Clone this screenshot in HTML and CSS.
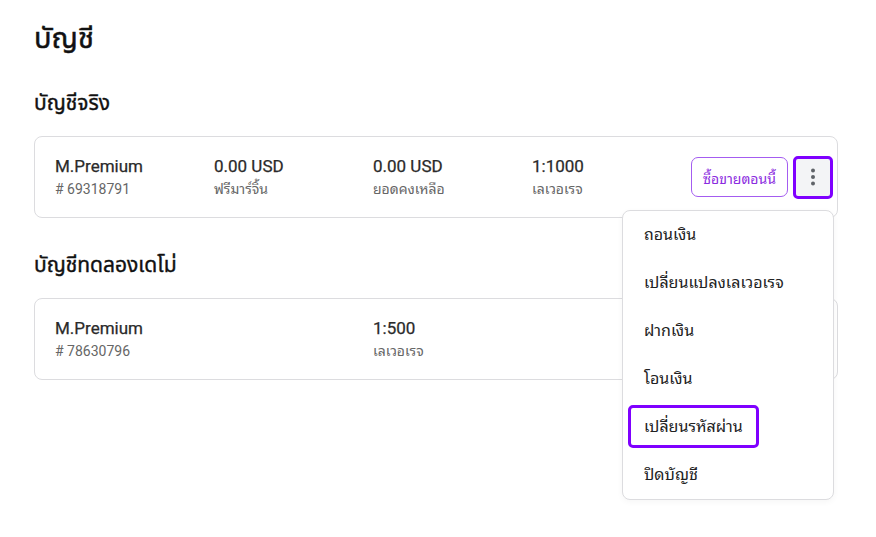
FILE: index.html
```html
<!DOCTYPE html>
<html lang="th">
<head>
<meta charset="utf-8">
<title>บัญชี</title>
<link rel="stylesheet" href="styles.css">
</head>
<body>
<main class="page">
  <h1 class="title">บัญชี</h1>

  <h2 class="section-title">บัญชีจริง</h2>
  <div class="card">
    <div class="col">
      <div class="main">M.Premium</div>
      <div class="sub"># 69318791</div>
    </div>
    <div class="col">
      <div class="main">0.00 USD</div>
      <div class="sub">ฟรีมาร์จิ้น</div>
    </div>
    <div class="col">
      <div class="main">0.00 USD</div>
      <div class="sub">ยอดคงเหลือ</div>
    </div>
    <div class="col">
      <div class="main">1:1000</div>
      <div class="sub">เลเวอเรจ</div>
    </div>
    <div class="actions">
      <button class="trade-btn">ซื้อขายตอนนี้</button>
      <div class="kebab-wrap">
        <button class="kebab-btn" aria-label="more">
          <svg width="6" height="18" viewBox="0 0 6 18"><circle cx="3" cy="2.5" r="2" fill="#5f6368"/><circle cx="3" cy="9" r="2" fill="#5f6368"/><circle cx="3" cy="15.5" r="2" fill="#5f6368"/></svg>
        </button>
        <ul class="menu">
          <li class="menu-item"><span class="menu-link">ถอนเงิน</span></li>
          <li class="menu-item"><span class="menu-link">เปลี่ยนแปลงเลเวอเรจ</span></li>
          <li class="menu-item"><span class="menu-link">ฝากเงิน</span></li>
          <li class="menu-item"><span class="menu-link">โอนเงิน</span></li>
          <li class="menu-item"><span class="menu-link focused">เปลี่ยนรหัสผ่าน</span></li>
          <li class="menu-item"><span class="menu-link">ปิดบัญชี</span></li>
        </ul>
      </div>
    </div>
  </div>

  <h2 class="section-title">บัญชีทดลองเดโม่</h2>
  <div class="card">
    <div class="col">
      <div class="main">M.Premium</div>
      <div class="sub"># 78630796</div>
    </div>
    <div class="col"></div>
    <div class="col">
      <div class="main">1:500</div>
      <div class="sub">เลเวอเรจ</div>
    </div>
    <div class="col"></div>
    <div class="actions"></div>
  </div>
</main>
</body>
</html>
```

FILE: styles.css
```css
* { box-sizing: border-box; }
html, body { margin: 0; background: #ffffff; }
body {
  font-family: Roboto, "Noto Sans Thai Looped", Loma, Garuda, Tahoma, "Noto Sans", sans-serif;
  color: #222222;
}
.page {
  min-height: 537px;
  padding: 18px 38px 18px 34px;
}
.title {
  margin: 0 0 31px;
  font-family: Roboto, "Noto Sans Thai", "Noto Sans", sans-serif;
  font-size: 29px;
  line-height: 40px;
  font-weight: 400;
  -webkit-text-stroke: 0.5px #111;
  color: #111111;
}
.section-title {
  margin: 0 0 19px;
  font-family: Roboto, "Noto Sans Thai", "Noto Sans", sans-serif;
  font-size: 21px;
  line-height: 28px;
  font-weight: 400;
  -webkit-text-stroke: 0.4px #111;
  color: #111111;
}
.card {
  display: grid;
  grid-template-columns: 159px 159px 159px 1fr auto;
  align-items: center;
  height: 82px;
  padding: 0 7px 0 20px;
  border: 1px solid #dcdcdf;
  border-radius: 8px;
  margin-bottom: 33px;
  background: #fff;
}
.col { display: flex; flex-direction: column; }
.main {
  font-size: 17px;
  line-height: 22px;
  font-weight: 400;
  -webkit-text-stroke: 0.25px #2a2a2a;
  color: #2a2a2a;
}
.sub {
  font-size: 14px;
  line-height: 20px;
  color: #666666;
  margin-top: 2px;
}
.actions {
  display: flex;
  align-items: center;
  gap: 8px;
}
.trade-btn {
  font-family: inherit;
  height: 40px;
  width: 97px;
  padding: 0;
  font-size: 14px;
  color: #8b2be0;
  background: #fff;
  border: 1px solid #a45cf0;
  border-radius: 7px;
}
.kebab-wrap { position: relative; }
.kebab-btn {
  display: flex;
  align-items: center;
  justify-content: center;
  width: 34px;
  height: 37px;
  padding: 0;
  background: #f3f4f6;
  border: none;
  border-radius: 2px;
  outline: 3px solid #7f00ff;
}
.menu {
  position: absolute;
  top: calc(100% + 14px);
  right: -4px;
  width: 212px;
  margin: 0;
  padding: 0;
  list-style: none;
  background: #fff;
  border: 1px solid #dcdcdf;
  border-radius: 8px;
  box-shadow: 0 2px 6px rgba(0,0,0,0.04);
  z-index: 2;
}
.menu-item {
  display: flex;
  align-items: center;
  height: 48px;
  padding-left: 8px;
}
.menu-link {
  display: inline-block;
  padding: 8px 13px;
  font-size: 16px;
  line-height: 21px;
  color: #222;
  border-radius: 2px;
}
.menu-link.focused {
  outline: 3px solid #7f00ff;
}
```
